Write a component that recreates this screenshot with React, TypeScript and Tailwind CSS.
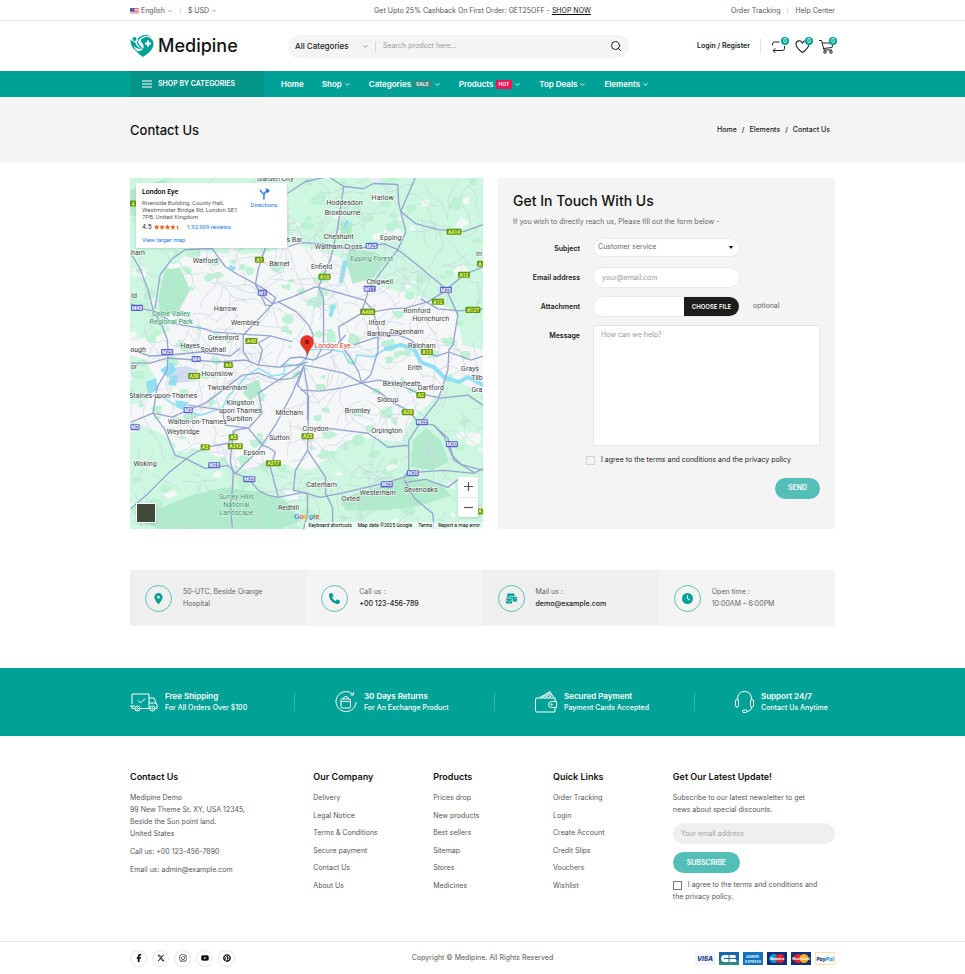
import type { ReactNode } from "react";
import { ChevronDown, Search } from "lucide-react";
import {
  FaClock,
  FaFacebookF,
  FaInstagram,
  FaLocationDot,
  FaPhone,
  FaPinterest,
  FaXTwitter,
  FaYoutube,
} from "react-icons/fa6";
import { FaMailBulk } from "react-icons/fa";

const container = "mx-auto w-full max-w-[705px]";

/* ---------- Map ---------- */

function seeded(seed: number) {
  let s = seed;
  return () => {
    s = (s * 1664525 + 1013904223) % 4294967296;
    return s / 4294967296;
  };
}

// Local streets: short wandering lines over the whole sheet.
const streets: string[] = (() => {
  const r = seeded(7);
  const out: string[] = [];
  for (let i = 0; i < 380; i++) {
    let x = 130 + r() * 352;
    let y = 178 + r() * 351;
    let a = r() * Math.PI * 2;
    let d = `M${x.toFixed(0)} ${y.toFixed(0)}`;
    for (let k = 0; k < 5; k++) {
      a += (r() - 0.5) * 1.3;
      x += Math.cos(a) * 7;
      y += Math.sin(a) * 7;
      d += `L${x.toFixed(0)} ${y.toFixed(0)}`;
    }
    out.push(d);
  }
  return out;
})();

// Irregular patches for parks and small settlements.
const blobs = (n: number, seed: number, size: number): string[] => {
  const r = seeded(seed);
  const out: string[] = [];
  for (let i = 0; i < n; i++) {
    const x = 130 + r() * 352;
    const y = 178 + r() * 351;
    const m = 2 + r() * size;
    const pts: string[] = [];
    for (let k = 0; k < 7; k++) {
      const a = (k / 7) * Math.PI * 2;
      const q = m * (0.5 + r() * 0.8);
      pts.push(`${(x + Math.cos(a) * q * 1.3).toFixed(0)},${(y + Math.sin(a) * q).toFixed(0)}`);
    }
    out.push(pts.join(" "));
  }
  return out;
};
const parks = blobs(200, 21, 4);
const villages = blobs(110, 99, 5);

const majorRoads = [
  "131,254 140,269 148,290 153,310 162,326 167,339 168,352 167,370 157,387 153,413 165,430 175,455 185,458 205,468 228,465 235,473 248,478 258,490 268,495 278,497 302,492 320,497 340,493 383,483 403,477 408,470 408,440 420,422 437,400 447,370 448,350 452,345 457,315 445,289 415,264 397,250 383,244 353,250 320,244 300,243 288,247",
  "212,249 185,250 172,259 160,275 155,309",
  "131,304 143,309 153,311 175,324 205,329 212,332 238,334 270,336 292,342",
  "200,238 212,249 225,267 238,275 255,284 260,294 272,304 292,297 315,287 320,288 363,300 372,310 378,330 377,352 370,375 361,383",
  "270,212 268,239 258,269 255,285 265,305 271,306 275,298 265,290 255,284",
  "287,194 305,182 328,177 343,187 363,189 373,184 397,185 398,204 400,212",
  "272,304 265,312 243,335 243,352 250,362",
  "278,302 296,312 308,325 313,335 305,360",
  "415,177 400,212 405,232 397,250 378,275 368,289 365,300 360,314 338,327 340,345",
  "400,212 415,224 437,230 463,232 482,225",
  "343,187 337,229 330,259 318,287 323,299 323,345 315,360",
  "482,267 463,275 443,292 427,302 405,308 390,309 372,312",
  "420,299 437,309 458,311 482,309",
  "353,345 377,337 397,335 410,340 423,352 436,356 448,352 470,360 482,356",
  "131,363 150,363 167,358 195,360 218,362 245,360 258,365 278,367 295,365 307,362",
  "131,350 150,356 170,355 200,352 230,356 240,348",
  "131,422 153,413 172,417 188,410 205,403 220,392 242,375 258,373 278,380 292,378 302,370",
  "188,405 222,410 225,425 248,428",
  "131,508 148,493 168,473 188,457 205,447 228,443 235,430 248,428 262,413 258,393 278,380 305,362",
  "233,430 230,460 233,473 232,490 230,505 232,527",
  "235,473 258,450 275,425 292,393 303,366",
  "248,428 262,445 268,447 275,452 270,467 278,497",
  "302,370 297,385 308,396 308,410 307,450 295,470 293,490 307,493 307,513 303,529",
  "307,450 325,477 325,493 332,507 332,528",
  "403,477 413,472 443,470 473,473 482,468",
  "420,423 433,425 447,438 453,460 473,472",
  "433,425 443,436 451,455 460,464 482,470",
  "303,365 320,368 343,373 361,383 380,393 393,403 407,410 416,420",
  "361,383 378,380 393,382 417,393 440,398 467,395 482,405",
  "300,390 320,391 340,388 361,383",
  "326,428 367,433 378,440 387,447 408,445",
  "403,479 413,497 422,505 432,513 433,529",
  "405,482 425,479 447,487 460,477",
  "303,365 307,390 307,420",
  "280,367 290,358 300,357 313,360 330,352 345,335",
  "258,365 262,350 258,343 270,336",
  "340,345 350,358 358,372 361,383",
];

const greenAreas = [
  "130,178 300,178 286,210 300,240 270,252 240,255 200,252 185,256 172,268 166,290 158,305 170,330 150,340 130,335",
  "300,178 482,178 482,350 462,345 455,312 430,300 400,292 372,285 350,275 352,262 335,256 300,246 286,210",
  "130,355 145,360 155,378 148,400 130,405",
  "130,420 160,432 178,446 205,450 222,460 248,470 268,462 288,465 310,470 330,456 345,440 375,438 400,442 410,420 432,400 450,378 470,388 482,392 482,529 130,529",
];
const deepGreen = [
  "160,508 190,495 225,487 262,492 285,500 300,520 280,529 160,529 140,520",
  "340,498 385,484 408,476 440,484 450,495 420,505 380,510 345,510",
  "412,440 425,428 440,440 448,462 430,470 410,466",
  "165,270 180,268 190,290 178,312 160,318 158,300",
  "130,190 165,180 170,200 150,222 130,215",
  "348,250 375,252 385,262 372,278 352,284 345,262",
  "245,385 258,380 262,392 250,400 243,394",
  "340,222 352,222 350,240 340,238",
];
const waters = [
  "160,370 172,362 176,370 168,378",
  "146,382 156,378 158,390 148,394",
  "176,400 188,402 186,408 176,407",
  "170,376 178,375 176,386 168,385",
  "343,260 347,262 342,284 338,283",
  "345,220 348,221 346,229 343,228",
  "331,305 335,306 331,318 328,315",
  "230,265 236,268 233,271 228,268",
];

type Label = [string, number, number];
const towns: Label[] = [
  ["Garden City", 275, 182], ["Hoddesdon", 344, 205], ["Broxbourne", 342, 215], ["Harlow", 382, 200],
  ["Cheshunt", 338, 239], ["Waltham Cross", 338, 249], ["Epping", 390, 240], ["Enfield", 321, 269],
  ["Chigwell", 379, 284], ["Romford", 416, 313], ["Hornchurch", 430, 321], ["Ilford", 376, 325],
  ["Barking", 378, 336], ["Dagenham", 406, 334], ["Rainham", 421, 348], ["s Bar", 294, 242],
  ["Watford", 205, 263], ["Barnet", 279, 266], ["Harrow", 225, 311], ["Wembley", 245, 325],
  ["Greenford", 223, 340], ["Hayes", 190, 348], ["Southall", 213, 352], ["ough", 138, 352],
  ["ham", 138, 255], ["ld", 134, 298], ["or", 134, 369], ["Hounslow", 217, 376], ["Twickenham", 227, 390],
  ["Staines-upon-Thames", 163, 398], ["Kingston", 240, 405], ["upon Thames", 240, 413],
  ["Surbiton", 239, 421], ["Walton-on-Thames", 197, 424], ["Weybridge", 183, 434],
  ["Mitcham", 289, 415], ["Sutton", 279, 440], ["Epsom", 254, 455], ["Woking", 145, 466],
  ["Croydon", 315, 431], ["Erith", 414, 370], ["Grays", 469, 371], ["Bexleyheath", 401, 386],
  ["Dartford", 430, 390], ["Tilb", 476, 380], ["Gra", 476, 392], ["Sidcup", 387, 402],
  ["Bromley", 357, 413], ["Orpington", 386, 433], ["Caterham", 321, 487], ["Westerham", 377, 495],
  ["Oxted", 350, 501], ["Sevenoaks", 420, 492], ["Redhill", 288, 510], ["In", 478, 256],
];
const natureLabels: Label[] = [
  ["Epping Forest", 371, 261], ["Colne Valley", 171, 316], ["Regional Park", 171, 324],
  ["Surrey Hills", 236, 499], ["National", 236, 507], ["Landscape", 236, 515],
];
const motorways: Label[] = [
  ["M1", 262, 293], ["M40", 137, 308], ["M25", 167, 352], ["M4", 196, 359], ["M3", 188, 410],
  ["M3", 135, 427], ["M25", 214, 465], ["M25", 249, 479], ["M25", 371, 246], ["M11", 369, 289],
  ["M25", 445, 290], ["M25", 421, 422], ["M20", 451, 444], ["M25", 412, 473], ["M25", 386, 484],
];
const aRoads: Label[] = [
  ["A1", 259, 260], ["A40", 251, 341], ["A4", 228, 365], ["A30", 194, 376], ["A3", 233, 437],
  ["A3", 205, 447], ["A243", 235, 446], ["A217", 273, 463], ["A23", 307, 436], ["A10", 324, 277],
  ["A414", 453, 232], ["A12", 463, 275], ["A12", 437, 302], ["A127", 472, 310], ["A406", 367, 312],
  ["A13", 426, 352], ["A2", 420, 395], ["A20", 407, 412], ["A", 479, 511], ["A", 479, 264],
  ["4", 133, 204],
];

function Shield({ label, color, ink }: { label: Label; color: string; ink: string }) {
  const [name, x, y] = label;
  const w = name.length * 3 + 3;
  return (
    <g>
      <rect x={x - w / 2} y={y - 3} width={w} height="6" rx="1" fill={color} />
      <text x={x} y={y + 2} fontSize="5" fontWeight="700" textAnchor="middle" fill={ink}>{name}</text>
    </g>
  );
}

function MapCanvas() {
  return (
    <svg viewBox="130 178 352 351" preserveAspectRatio="xMidYMid slice" className="block h-full w-full font-['Roboto',sans-serif]" role="img" aria-label="Map of London">
      <rect x="130" y="178" width="352" height="351" fill="#f5f6f8" />
      {greenAreas.map((p) => <polygon key={p} points={p} fill="#cdf7e0" />)}
      {villages.map((p, i) => <polygon key={i} points={p} fill="#f1f8f6" />)}
      {parks.map((p, i) => <polygon key={i} points={p} fill="#bdf2d4" />)}
      {deepGreen.map((p) => <polygon key={p} points={p} fill="#b0ebcb" />)}
      <polygon points="170,368 186,366 198,370 196,381 176,383 171,376" fill="#d3daf3" />
      {waters.map((p) => <polygon key={p} points={p} fill="#90e0f2" />)}
      <g fill="none" stroke="#c9d2e0" strokeWidth="0.6">
        {streets.map((d, i) => <path key={i} d={d} />)}
      </g>
      <g fill="none" stroke="#8ee0f5" strokeLinejoin="round" strokeLinecap="round">
        <path strokeWidth="1.500" d="M160 395L180 408L200 415L222 408L228 396L236 388L246 376L258 368L272 376L284 374L284 364L298 366L306 358L306 350L325 349L343 352Q347 363 351 364T356 355L372 357L385 349L400 345L415 350" />
        <path strokeWidth="4" d="M385 349L400 345L413 349L420 362L433 367L443 377L458 382L467 377L482 385" />
      </g>
      <g fill="none" stroke="#95a5cf" strokeWidth="1.300" strokeLinejoin="round">
        {majorRoads.map((p) => <polyline key={p} points={p} />)}
      </g>
      {motorways.map((l, i) => <Shield key={i} label={l} color="#5b62c9" ink="#ffffff" />)}
      {aRoads.map((l, i) => <Shield key={i} label={l} color="#5f9a10" ink="#fbf37a" />)}
      <g fontSize="7" textAnchor="middle" fill="#3c4043" stroke="#ffffff" strokeOpacity="0.7" strokeWidth="1.500" paintOrder="stroke">
        {towns.map(([t, x, y]) => <text key={t} x={x} y={y}>{t}</text>)}
      </g>
      <g fontSize="7" textAnchor="middle" fill="#37926a" stroke="#e2f9ec" strokeWidth="1" paintOrder="stroke">
        {natureLabels.map(([t, x, y]) => <text key={t} x={x} y={y}>{t}</text>)}
      </g>
      <text x="314" y="348" fontSize="7" fill="#d93025" stroke="#ffffff" strokeWidth="1.500" paintOrder="stroke">London Eye</text>
      <path d="M307 355C306 349 300 347 300 342A6.500 6.500 0 0 1 313 342C313 347 308 349 307 355Z" fill="#ea3323" stroke="#c5221f" strokeWidth="0.500" />
      <circle cx="306.500" cy="342" r="2.300" fill="#8c1a12" />
    </svg>
  );
}

function ContactMap() {
  return (
    <section aria-label="Store location" className="relative h-[351px] overflow-hidden font-['Roboto',sans-serif]">
      <MapCanvas />
      <div className="absolute left-[6px] top-[5px] flex h-[65px] w-[151px] justify-between bg-white px-[6px] pt-[5px] shadow-sm">
        <div className="text-[6px] leading-[7px] text-[#5b5b5b]">
          <h2 className="mb-[3px] text-[7px] font-medium leading-[8px] text-black">London Eye</h2>
          <p>Riverside Building, County Hall,<br />Westminster Bridge Rd, London SE1<br />7PB, United Kingdom</p>
          <p className="mt-[3px] flex items-center text-[7px] leading-[8px] text-[#333]">
            4.5
            <svg viewBox="0 0 50 10" className="ml-[2px] h-[6px] w-[27px]" aria-hidden="true">
              {[0, 10, 20, 30, 40].map((x) => (
                <path key={x} transform={`translate(${x} 0)`} d={x === 40 ? "M5 0V8L2 10L3 6L0 4H4Z" : "M5 0L6.300 3.600L10 3.800L7.200 6.200L8 10L5 7.800L2 10L2.800 6.200L0 3.800L3.700 3.600Z"} fill="#e7611b" />
              ))}
            </svg>
            <a href="#reviews" className="ml-[6px] text-[6px] text-[#1a73e8]">1,92,909 reviews</a>
          </p>
          <a href="#larger" className="mt-[5px] block text-[6px] leading-[8px] text-[#1a73e8]">View larger map</a>
        </div>
        <a href="#directions" className="flex w-[34px] flex-col items-center text-[6px] leading-[8px] text-[#1a73e8]">
          <svg viewBox="0 0 20 22" className="mb-[1px] h-[12px] w-[11px]" fill="none" stroke="#4285f4" strokeWidth="3" aria-hidden="true">
            <path d="M2 3C3 9 9 8 9 13V21M9 12C10 8 13 6 16 5" />
            <path d="M12 0L20 4L15 10Z" fill="#1a73e8" stroke="none" />
          </svg>
          Directions
        </a>
      </div>
      <button type="button" aria-label="Satellite view" className="absolute bottom-[6px] left-[6px] size-[20px] border border-white bg-[#40493a] shadow" />
      <div className="absolute bottom-[12px] right-[5px] flex h-[40px] w-[20px] flex-col divide-y divide-gray-200 rounded-[1px] bg-white text-[#555] shadow">
        <button type="button" aria-label="Zoom in" className="flex flex-1 items-center justify-center">
          <svg viewBox="0 0 9 9" className="size-[9px]" stroke="currentColor" strokeWidth="1.200"><path d="M0 4.500H9M4.500 0V9" /></svg>
        </button>
        <button type="button" aria-label="Zoom out" className="flex flex-1 items-center justify-center">
          <svg viewBox="0 0 9 9" className="size-[9px]" stroke="currentColor" strokeWidth="1.200"><path d="M0 4.500H9" /></svg>
        </button>
      </div>
      <div className="absolute bottom-[7px] left-[164px] text-[8px] font-medium leading-[10px]">
        <span className="text-[#4285f4]">G</span><span className="text-[#ea4335]">o</span><span className="text-[#fbbc04]">o</span><span className="text-[#4285f4]">g</span><span className="text-[#34a853]">l</span><span className="text-[#ea4335]">e</span>
      </div>
      <div className="absolute bottom-0 right-0 flex gap-[6px] bg-white/60 px-[3px] text-[5px] leading-[7px] text-black">
        <span>Keyboard shortcuts</span><span>Map data ©2025 Google</span><span>Terms</span><span>Report a map error</span>
      </div>
    </section>
  );
}

/* ---------- Header ---------- */

function Flag() {
  return (
    <svg viewBox="0 0 18 12" className="h-[6px] w-[9px]" aria-hidden="true">
      <rect width="18" height="12" fill="#fff" />
      <path d="M0 1H18M0 4H18M0 7H18M0 10H18" stroke="#d8505c" strokeWidth="1.500" />
      <rect width="9" height="7" fill="#4a62a8" />
    </svg>
  );
}

function TopBar() {
  return (
    <div className="border-b border-[#e6e6e6] text-[7px] leading-[12px] text-[#555]">
      <div className={`${container} grid h-5 grid-cols-[1fr_auto_1fr] items-center pt-px`}>
        <div className="flex items-center">
          <button type="button" className="flex items-center gap-[2px]"><Flag />English<ChevronDown className="size-[6px]" /></button>
          <span className="mx-[7px] h-[7px] w-px bg-[#ddd]" />
          <button type="button" className="flex items-center gap-[2px]">$ USD<ChevronDown className="size-[6px]" /></button>
        </div>
        <p>Get Upto 25% Cashback On First Order: GET25OFF - <a href="#shop" className="text-[#111] underline">SHOP NOW</a></p>
        <div className="flex items-center justify-end">
          <a href="#tracking">Order Tracking</a>
          <span className="mx-[7px] h-[7px] w-px bg-[#ddd]" />
          <a href="#help">Help Center</a>
        </div>
      </div>
    </div>
  );
}

function Logo() {
  return (
    <a href="#home" className="flex items-center gap-1 text-[18px] font-medium leading-6 text-[#141414]">
      <svg viewBox="0 0 48 48" className="size-6" aria-hidden="true">
        <path d="M22 11C30 1 47 6 47 20C47 32 34 40 26 46C22 43 16 39 12 34C24 37 32 26 24 18C21 16 21 13 22 11Z" fill="#00a297" />
        <path d="M15 10C22 1 34 0 42 6C32 2 22 5 17 13Z" fill="#00a297" />
        <circle cx="9" cy="10" r="4" fill="#00a297" />
        <path d="M1 10C4 16 10 14 12 20C14 26 18 28 24 29C16 31 9 28 8 22C8 31 16 36 24 37C10 37 0 25 1 10Z" fill="#00a297" />
        <path d="M17 12C14 22 24 24 26 31C21 27 13 24 14 14Z" fill="#00a297" />
        <path d="M36 13V25M30 19H42" stroke="#fff" strokeWidth="4" />
      </svg>
      Medipine
    </a>
  );
}

function Badge() {
  return <span className="absolute -right-[3px] -top-[2px] flex size-[8px] items-center justify-center rounded-full bg-[#00a297] text-[6px] font-medium leading-none text-white">0</span>;
}

function Header() {
  return (
    <header className={`${container} flex h-[50px] items-center`}>
      <div className="w-[158px] shrink-0"><Logo /></div>
      <form className="flex h-[23px] flex-1 items-center rounded-full bg-[#f4f4f4] px-[7px]" onSubmit={(e) => e.preventDefault()}>
        <div className="relative flex w-[74px] items-center">
          <select aria-label="Search category" className="w-full appearance-none bg-transparent text-[8px] font-medium leading-[12px] text-[#222] outline-none">
            <option>All Categories</option>
          </select>
          <ChevronDown className="pointer-events-none absolute right-0 size-[7px] text-[#555]" />
        </div>
        <span className="ml-[6px] mr-[7px] h-[11px] w-px bg-[#d8d8d8]" />
        <input aria-label="Search product" placeholder="Search product here..." className="min-w-0 flex-1 bg-transparent text-[7px] text-[#555] outline-none placeholder:text-[#9b9b9b]" />
        <button type="submit" aria-label="Search"><Search className="size-[12px] text-[#222]" strokeWidth={2} /></button>
      </form>
      <a href="#login" className="ml-[68px] text-[7px] font-semibold text-[#222]">Login / Register</a>
      <span className="mx-[10px] h-[14px] w-px bg-[#e2e2e2]" />
      <div className="flex items-center gap-[9px] pr-px text-[#222]">
        <a href="#compare" aria-label="Compare" className="relative">
          <svg viewBox="0 0 30 30" className="size-[15px]" fill="none" stroke="currentColor" strokeWidth="2">
            <path d="M3 13V10Q3 6 7 6H17M27 14V19Q27 23 23 23H5M9 19L4 23L9 28" />
          </svg>
          <Badge />
        </a>
        <a href="#wishlist" aria-label="Wishlist" className="relative">
          <svg viewBox="0 0 30 30" className="size-[15px]" fill="none" stroke="currentColor" strokeWidth="2.200">
            <path d="M15 27C8 22 2 17 2 10C2 3 11 1 15 8C19 1 28 3 28 10C28 17 22 22 15 27Z" />
          </svg>
          <Badge />
        </a>
        <a href="#cart" aria-label="Cart" className="relative">
          <svg viewBox="0 0 30 30" className="size-[15px]" fill="none" stroke="currentColor" strokeWidth="2">
            <path d="M0 3H5L10 22H26M7 8H28L26 17L9 19" /><circle cx="12" cy="26" r="2.500" /><circle cx="24" cy="26" r="2.500" />
          </svg>
          <Badge />
        </a>
      </div>
    </header>
  );
}

const navItems: { name: string; tag?: "SALE" | "HOT"; menu: boolean }[] = [
  { name: "Home", menu: false },
  { name: "Shop", menu: true },
  { name: "Categories", tag: "SALE", menu: true },
  { name: "Products", tag: "HOT", menu: true },
  { name: "Top Deals", menu: true },
  { name: "Elements", menu: true },
];

function Nav() {
  return (
    <nav className="bg-[#00a297] text-white">
      <div className={`${container} flex h-[26px] items-center`}>
        <button type="button" className="flex h-full w-[134px] shrink-0 items-center gap-[6px] bg-[#05948a] pl-[12px] text-[7px] font-semibold">
          <svg viewBox="0 0 10 8" className="h-[8px] w-[10px]" stroke="currentColor"><path d="M0 1H10M0 4H10M0 7H10" /></svg>
          SHOP BY CATEGORIES
        </button>
        <ul className="ml-[17px] flex items-center gap-[18px] text-[8px] font-semibold">
          {navItems.map((n) => (
            <li key={n.name}>
              <a href="#nav" className="flex items-center gap-[2px]">
                {n.name}
                {n.tag === "SALE" && <span className="rounded-[1px] bg-[#2b8a82] px-[3px] text-[5px] leading-[8px]">SALE</span>}
                {n.tag === "HOT" && <span className="rounded-[1px] bg-[#f0145a] px-[3px] text-[5px] leading-[9px]">HOT</span>}
                {n.menu && <ChevronDown className="size-[7px]" strokeWidth={3} />}
              </a>
            </li>
          ))}
        </ul>
      </div>
    </nav>
  );
}

/* ---------- Contact form ---------- */

function Field({ id, label, children }: { id: string; label: string; children: ReactNode }) {
  return (
    <div className="grid grid-cols-[67px_1fr] gap-[13px]">
      <label htmlFor={id} className="pt-[5px] text-right text-[7px] font-semibold leading-[12px] text-[#222]">{label}</label>
      <div className="flex items-center">{children}</div>
    </div>
  );
}

function ContactForm() {
  const box = "w-[147px] rounded-full border border-[#ebebeb] bg-white text-[7px] text-[#666] outline-none placeholder:text-[#999]";
  return (
    <form className="h-[351px] bg-[#f4f4f4] px-[15px] pt-[14px]" onSubmit={(e) => e.preventDefault()}>
      <h2 className="text-[14px] font-medium leading-[18px] text-[#111]">Get In Touch With Us</h2>
      <p className="mb-[10px] mt-[6px] text-[7px] leading-[12px] text-[#666]">If you wish to directly reach us, Please fill out the form below -</p>
      <div className="flex flex-col gap-[8px]">
        <Field id="subject" label="Subject">
          <div className="relative flex h-[21px] items-start">
            <select id="subject" className={`${box} h-[19px] appearance-none pl-[4px]`}>
              <option>Customer service</option>
            </select>
            <svg viewBox="0 0 4 3" className="pointer-events-none absolute right-[7px] top-[8px] h-[3px] w-[4px]"><path d="M0 0H4L2 3Z" /></svg>
          </div>
        </Field>
        <Field id="email" label="Email address">
          <input id="email" type="email" placeholder="your@email.com" className={`${box} h-[21px] px-[8px]`} />
        </Field>
        <Field id="file" label="Attachment">
          <label className={`${box} flex h-[21px] items-stretch justify-end overflow-hidden`}>
            <input id="file" type="file" className="sr-only" />
            <span className="flex w-[55px] items-center justify-center bg-[#1c1c1c] text-[6px] font-semibold text-white">CHOOSE FILE</span>
          </label>
          <span className="ml-[13px] text-[7px] text-[#666]">optional</span>
        </Field>
        <Field id="message" label="Message">
          <textarea id="message" placeholder="How can we help?" className="block h-[121px] w-full resize-none rounded-[2px] border border-[#e6e6e6] bg-white px-[7px] py-[3px] text-[7px] leading-[12px] text-[#666] outline-none placeholder:text-[#999]" />
        </Field>
      </div>
      <label className="ml-[73px] mt-[8px] flex items-center gap-[6px] text-[7px] leading-[12px] text-[#222]">
        <input type="checkbox" className="size-[9px] appearance-none border border-[#d4d4d4]" />
        I agree to the terms and conditions and the privacy policy
      </label>
      <button type="submit" className="ml-auto mt-[12px] block h-[21px] w-[45px] rounded-full bg-[#53bfb8] text-[7px] font-semibold text-white">SEND</button>
    </form>
  );
}

const infoCards: { icon: ReactNode; top: string; bottom: string; strong?: boolean }[] = [
  { icon: <FaLocationDot />, top: "50-UTC, Beside Orange", bottom: "Hospital" },
  { icon: <FaPhone />, top: "Call us :", bottom: "+00 123-456-789", strong: true },
  { icon: <FaMailBulk />, top: "Mail us :", bottom: "demo@example.com", strong: true },
  { icon: <FaClock />, top: "Open time :", bottom: "10:00AM – 6:00PM" },
];

function InfoStrip() {
  return (
    <section className={`${container} mt-[41px] grid h-[56px] grid-cols-4`}>
      {infoCards.map((c) => (
        <div key={c.top} className="flex items-center gap-[11px] bg-[#f4f4f4] pl-[15px] text-[7px] leading-[12px] text-[#666] odd:bg-[#efefef]">
          <span className="flex size-[27px] shrink-0 items-center justify-center rounded-full border border-[#5cbfb8] text-[11px] text-[#00a297]">{c.icon}</span>
          <p>{c.top}<br /><span className={c.strong ? "font-medium text-[#222]" : ""}>{c.bottom}</span></p>
        </div>
      ))}
    </section>
  );
}

/* ---------- Service band ---------- */

const services: { icon: ReactNode; size: string; box: string; title: string; text: string }[] = [
  {
    title: "Free Shipping", text: "For All Orders Over $100", size: "h-[20px] w-[28px]", box: "0 0 56 40",
    icon: <><path d="M10 33H4V28M4 24V4H38V33H20M38 12H48L52 22H38M52 22L54 26V33H50M40 33H38M0 28H10M16 17L21 22L30 13" /><circle cx="15" cy="33" r="5" /><circle cx="15" cy="33" r="1.500" /><circle cx="45" cy="33" r="5" /><circle cx="45" cy="33" r="1.500" /></>,
  },
  {
    title: "30 Days Returns", text: "For An Exchange Product", size: "size-[22px]", box: "0 0 44 44",
    icon: <><path d="M35 6A20 20 0 1 0 42 22M37 2V8H31" /><path d="M12 18Q12 16 14 16H29Q31 16 31 18V31Q31 34 28 34H15Q12 34 12 31ZM12 21H31M16 16Q17 11 22 11T27 16" /></>,
  },
  {
    title: "Secured Payment", text: "Payment Cards Accepted", size: "size-[22px]", box: "0 0 44 44",
    icon: <><path d="M40 21V14H4Q1 14 1 17V39Q1 42 4 42H40V33M43 21H33Q27 22 27 27T33 33H43ZM8 14L30 1L38 14M14 13L30 4M20 13L32 6M27 13L34 9" /><circle cx="33" cy="27" r="1.500" /></>,
  },
  {
    title: "Support 24/7", text: "Contact Us Anytime", size: "h-[22px] w-[19px]", box: "0 0 38 44",
    icon: <><path d="M5 17Q5 1 19 1T33 17M33 32Q33 40 24 41" /><rect x="1" y="17" width="6" height="15" rx="3" /><rect x="31" y="17" width="6" height="15" rx="3" /><rect x="15" y="38" width="9" height="5" rx="2.500" /></>,
  },
];

function ServiceBand() {
  return (
    <section className="mt-[42px] bg-[#00a297] text-white">
      <ul className={`${container} grid h-[68px] grid-cols-[164fr_200fr_200fr_141fr] items-center`}>
        {services.map((s, i) => (
          <li key={s.title} className="flex items-center gap-[7px]">
            {i > 0 && <span aria-hidden="true" className="mr-[33px] h-[18px] w-px bg-white/20" />}
            <svg viewBox={s.box} className={s.size} fill="none" stroke="currentColor" strokeWidth="2" strokeLinejoin="round" aria-hidden="true">{s.icon}</svg>
            <div className="whitespace-nowrap">
              <h3 className="text-[8px] font-semibold leading-[12px]">{s.title}</h3>
              <p className="text-[7px] font-medium leading-[12px]">{s.text}</p>
            </div>
          </li>
        ))}
      </ul>
    </section>
  );
}

/* ---------- Footer ---------- */

const linkColumns = [
  { title: "Our Company", links: ["Delivery", "Legal Notice", "Terms & Conditions", "Secure payment", "Contact Us", "About Us"] },
  { title: "Products", links: ["Prices drop", "New products", "Best sellers", "Sitemap", "Stores", "Medicines"] },
  { title: "Quick Links", links: ["Order Tracking", "Login", "Create Account", "Credit Slips", "Vouchers", "Wishlist"] },
];

function FooterTitle({ children }: { children: ReactNode }) {
  return <h3 className="mb-[9px] text-[9px] font-semibold leading-[12px] text-[#111]">{children}</h3>;
}

const socials = [
  { name: "Facebook", icon: <FaFacebookF /> },
  { name: "X", icon: <FaXTwitter /> },
  { name: "Instagram", icon: <FaInstagram /> },
  { name: "YouTube", icon: <FaYoutube /> },
  { name: "Pinterest", icon: <FaPinterest /> },
];

function Payments() {
  const card = "h-[13px] w-[20px]";
  return (
    <div className="flex justify-end gap-1 font-['Inter',sans-serif]">
      <svg viewBox="0 0 40 26" className={card} role="img" aria-label="Visa">
        <rect width="40" height="26" fill="#f4f5f8" />
        <text x="20" y="18" fontSize="13" fontWeight="800" fontStyle="italic" textAnchor="middle" fill="#1b3f94">VISA</text>
      </svg>
      <svg viewBox="0 0 40 26" className={card} role="img" aria-label="Carte Bleue">
        <rect width="40" height="26" fill="#1668a8" /><rect y="17" width="40" height="9" fill="#2a8a88" />
        <path d="M19 6H11A7 7 0 0 0 11 20H19ZM21 6H32A3.500 3.500 0 0 1 32 12H21ZM21 14H32A3 3 0 0 1 32 20H21Z" fill="#fff" />
        <path d="M10 13H20" stroke="#1668a8" strokeWidth="2" />
      </svg>
      <svg viewBox="0 0 40 26" className={card} role="img" aria-label="American Express">
        <rect width="40" height="26" fill="#1473bb" />
        <text x="19" y="12" fontSize="8" fontWeight="700" textAnchor="middle" fill="#d5ebfa">AMERI</text>
        <text x="20" y="22" fontSize="7" fontWeight="700" textAnchor="middle" fill="#d5ebfa">EXPRESS</text>
      </svg>
      <svg viewBox="0 0 40 26" className={card} role="img" aria-label="Maestro">
        <rect width="40" height="26" fill="#07317a" /><circle cx="14" cy="13" r="9" fill="#1795d3" /><circle cx="26" cy="13" r="9" fill="#e4202c" />
        <text x="20" y="15" fontSize="7" fontWeight="700" textAnchor="middle" fill="#fff">Maestro</text>
      </svg>
      <svg viewBox="0 0 40 26" className={card} role="img" aria-label="MasterCard">
        <rect width="40" height="26" fill="#0d3277" /><circle cx="14" cy="13" r="9" fill="#e4202c" /><circle cx="26" cy="13" r="9" fill="#f5a623" />
        <text x="20" y="15" fontSize="6" fontWeight="700" textAnchor="middle" fill="#fff">MasterCard</text>
      </svg>
      <svg viewBox="0 0 40 26" className={card} role="img" aria-label="PayPal">
        <rect x="1" y="1" width="38" height="24" fill="#fffaf2" stroke="#f3bd72" />
        <text x="20" y="17" fontSize="10" fontWeight="800" fontStyle="italic" textAnchor="middle" fill="#173a80">Pay<tspan fill="#1aa0de">Pal</tspan></text>
      </svg>
    </div>
  );
}

function Footer() {
  return (
    <footer className="text-[7px] leading-[12px] text-[#555]">
      <div className={`${container} grid h-[205px] grid-cols-[26fr_17fr_17fr_17fr_23fr] pt-[35px]`}>
        <address className="not-italic">
          <FooterTitle>Contact Us</FooterTitle>
          <p>Medipine Demo<br />99 New Theme St. XY, USA 12345,<br />Beside the Sun point land.<br />United States</p>
          <p className="mt-[6px]">Call us: +00 123-456-7890</p>
          <p className="mt-[6px]">Email us: admin@example.com</p>
        </address>
        {linkColumns.map((c) => (
          <div key={c.title}>
            <FooterTitle>{c.title}</FooterTitle>
            <ul className="flex h-[100px] flex-col justify-between">
              {c.links.map((l) => <li key={l}><a href="#link">{l}</a></li>)}
            </ul>
          </div>
        ))}
        <form onSubmit={(e) => e.preventDefault()}>
          <FooterTitle>Get Our Latest Update!</FooterTitle>
          <p>Subscribe to our latest newsletter to get<br />news about special discounts.</p>
          <input type="email" aria-label="Newsletter email" placeholder="Your email address" className="mt-[7px] block h-[21px] w-full rounded-full bg-[#efefef] px-[8px] text-[7px] outline-none placeholder:text-[#a3a3a3]" />
          <button type="submit" className="mt-[8px] block h-[21px] w-[67px] rounded-full bg-[#53bfb8] text-[7px] font-semibold text-white">SUBSCRIBE</button>
          <label className="mt-[6px] block">
            <input type="checkbox" className="mr-[6px] size-[9px] appearance-none border border-[#777] align-middle" />
            I agree to the terms and conditions and<br />the privacy policy.
          </label>
        </form>
      </div>
      <div className="border-t border-[#e6e6e6]">
        <div className={`${container} grid h-[32px] grid-cols-[1fr_auto_1fr] items-center`}>
          <ul className="flex gap-[5px]">
            {socials.map((s) => (
              <li key={s.name}>
                <a href="#social" aria-label={s.name} className="flex size-[17px] items-center justify-center rounded-full border border-[#e6e6e6] text-[8px] text-[#111]">{s.icon}</a>
              </li>
            ))}
          </ul>
          <p>Copyright © Medipine. All Rights Reserved</p>
          <Payments />
        </div>
      </div>
    </footer>
  );
}

export default function App() {
  return (
    <div className="bg-white font-['Inter',sans-serif]">
      <TopBar />
      <Header />
      <Nav />
      <div className="bg-[#f4f4f4]">
        <div className={`${container} flex h-[65px] items-center justify-between pr-[5px]`}>
          <h1 className="text-[13px] font-medium leading-[16px] text-[#111]">Contact Us</h1>
          <nav aria-label="Breadcrumb" className="flex gap-[5px] text-[7px] font-medium leading-[12px] text-[#222]">
            <a href="#home">Home</a><span>/</span><a href="#elements">Elements</a><span>/</span><span>Contact Us</span>
          </nav>
        </div>
      </div>
      <main>
        <div className={`${container} mt-[16px] grid grid-cols-[22fr_21fr] gap-[15px]`}>
          <ContactMap />
          <ContactForm />
        </div>
        <InfoStrip />
      </main>
      <ServiceBand />
      <Footer />
    </div>
  );
}
